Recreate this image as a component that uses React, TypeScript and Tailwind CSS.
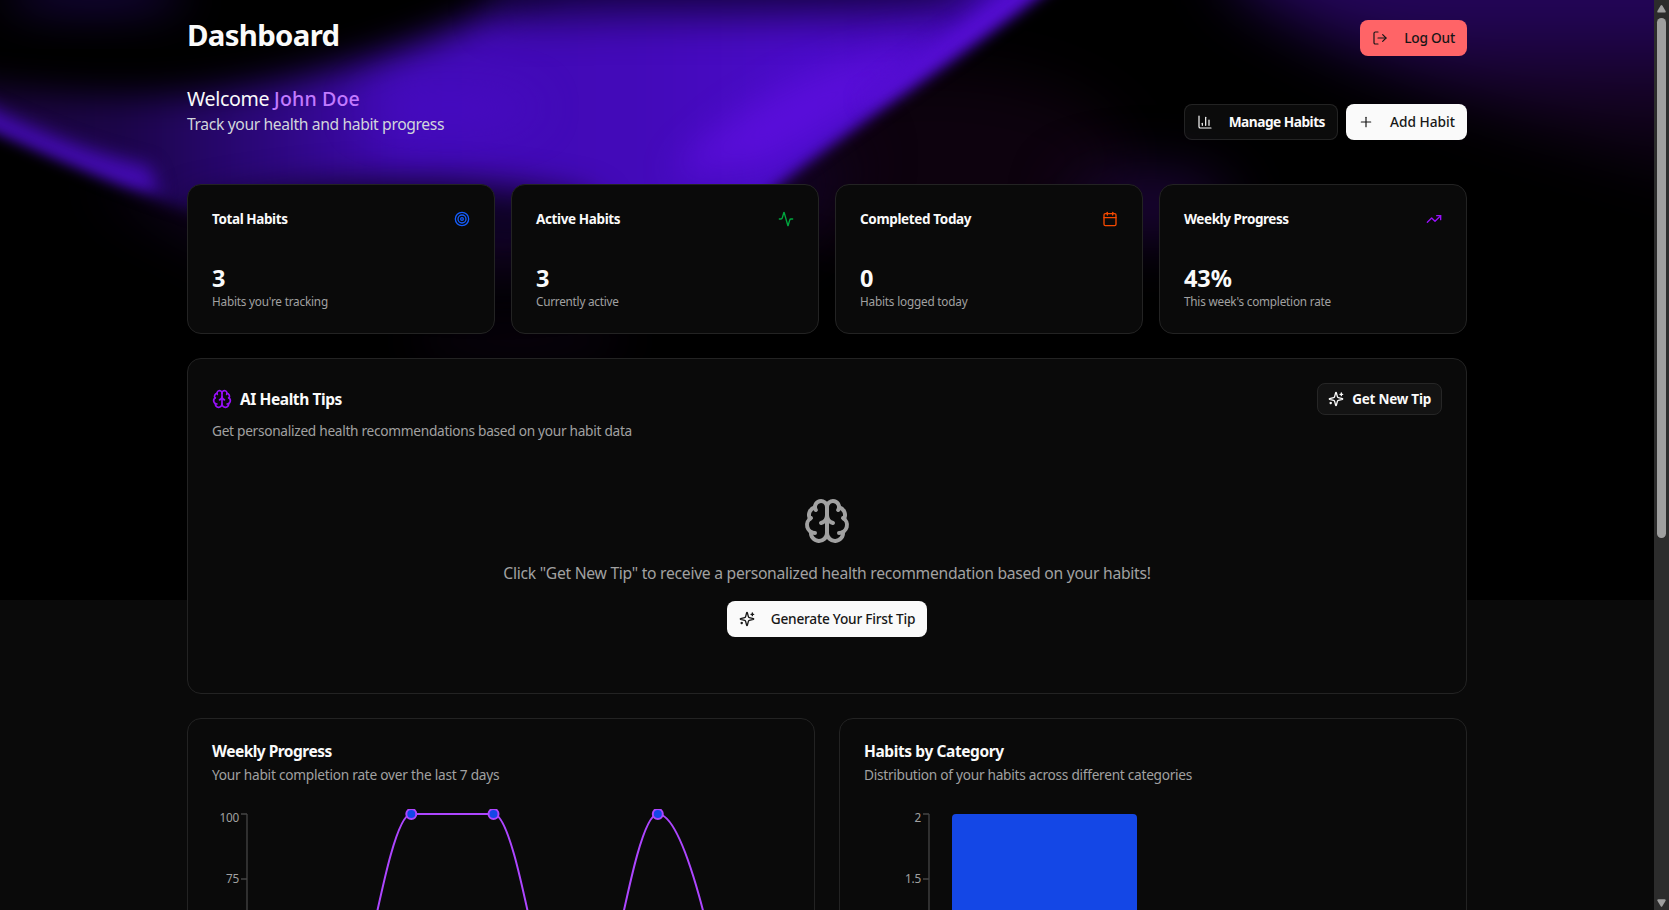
import type { ReactNode } from "react";
import {
  Activity,
  Brain,
  Calendar,
  ChartColumn,
  LogOut,
  Plus,
  Target,
  TrendingUp,
} from "lucide-react";

function Sparkles({ className }: { className: string }) {
  return (
    <svg
      viewBox="0 0 24 24"
      fill="none"
      stroke="currentColor"
      strokeWidth="2"
      strokeLinecap="round"
      strokeLinejoin="round"
      className={className}
    >
      <path d="M9.937 15.5A2 2 0 0 0 8.5 14.063l-6.135-1.582a.5.5 0 0 1 0-.962L8.5 9.936A2 2 0 0 0 9.937 8.5l1.582-6.135a.5.5 0 0 1 .963 0L14.063 8.5A2 2 0 0 0 15.5 9.937l6.135 1.581a.5.5 0 0 1 0 .964L15.5 14.063a2 2 0 0 0-1.437 1.437l-1.582 6.135a.5.5 0 0 1-.963 0z" />
      <path d="M20 3v4" />
      <path d="M22 5h-4" />
      <path d="M4 17v2" />
      <path d="M5 18H3" />
    </svg>
  );
}

/* Decorative aurora behind the header */
function Aurora() {
  return (
    <svg
      width="1654"
      height="600"
      viewBox="0 0 1654 600"
      className="absolute top-0 left-0"
      aria-hidden="true"
    >
      <defs>
        <filter id="b5" x="-20%" y="-20%" width="140%" height="140%" colorInterpolationFilters="sRGB"><feGaussianBlur stdDeviation="7" /></filter>
        <filter id="b9" x="-30%" y="-60%" width="160%" height="220%" colorInterpolationFilters="sRGB"><feGaussianBlur stdDeviation="9" /></filter>
        <filter id="b14" x="-40%" y="-60%" width="180%" height="220%" colorInterpolationFilters="sRGB"><feGaussianBlur stdDeviation="17" /></filter>
        <filter id="b20" x="-40%" y="-100%" width="180%" height="300%" colorInterpolationFilters="sRGB"><feGaussianBlur stdDeviation="22" /></filter>
        <filter id="b30" x="-60%" y="-120%" width="220%" height="340%" colorInterpolationFilters="sRGB"><feGaussianBlur stdDeviation="30" /></filter>
        <linearGradient id="body" gradientUnits="userSpaceOnUse" x1="0" y1="0" x2="1060" y2="0">
          <stop offset="0" stopColor="#1a053c" />
          <stop offset="0.12" stopColor="#1c054a" />
          <stop offset="0.25" stopColor="#2c077c" />
          <stop offset="0.38" stopColor="#410ab6" />
          <stop offset="0.6" stopColor="#430ab9" />
          <stop offset="0.76" stopColor="#4a0bc8" />
          <stop offset="1" stopColor="#4008b0" />
        </linearGradient>
        <linearGradient id="right" x1="0" y1="0" x2="0" y2="1">
          <stop offset="0" stopColor="#260660" />
          <stop offset="0.3" stopColor="#220556" />
          <stop offset="0.6" stopColor="#140320" />
          <stop offset="1" stopColor="#020003" />
        </linearGradient>
        <mask id="edge" maskUnits="userSpaceOnUse" x="0" y="0" width="1654" height="600">
          <path
            d="M-60 110 L-60 -60 L1112 -60 C1034 4 974 48 872 117 C834 144 800 168 770 192 C745 222 700 235 640 245 L300 240 C200 222 110 184 0 135 L-60 107 Z"
            fill="#fff"
            filter="url(#b5)"
          />
        </mask>
      </defs>
      <rect width="1654" height="600" fill="#000" />

      {/* faint violet haze */}
      <ellipse cx="930" cy="160" rx="200" ry="90" fill="#0d020e" filter="url(#b30)" />
      <ellipse cx="1150" cy="205" rx="80" ry="30" fill="#1f053e" filter="url(#b30)" />
      <ellipse cx="520" cy="340" rx="110" ry="14" fill="#0c0212" filter="url(#b20)" />
      <path d="M100 180 L860 150 L800 240 L500 270 L240 250 Z" fill="#130326" filter="url(#b30)" />
      <path d="M1230 -70 L1760 -70 L1760 210 C1600 140 1380 90 1230 -20 Z" fill="url(#right)" filter="url(#b30)" />

      <g mask="url(#edge)">
        <path
          d="M-60 82 C60 96 130 98 190 94 C320 80 440 48 570 -30 L1140 -60 L1060 260 L-60 260 Z"
          fill="url(#body)"
          filter="url(#b14)"
        />
        {/* top fade */}
        <path d="M500 -80 L1010 -80 L960 2 C880 14 760 14 640 12 L500 16 Z" fill="#12023a" filter="url(#b20)" />
        {/* lower fade */}
        <path d="M190 204 C330 174 470 172 590 200 L640 290 L160 290 Z" fill="#0e0224" filter="url(#b14)" />
        {/* bright core */}
        <path d="M670 175 C730 105 800 75 880 50 L950 40 L870 105 L765 165 Z" fill="#600fe2" opacity="0.72" filter="url(#b14)" />
        <ellipse cx="450" cy="108" rx="90" ry="20" fill="#4c0bcc" opacity="0.5" filter="url(#b20)" />
        {/* left streak */}
        <path d="M-30 98 C40 132 90 152 150 166 L160 194 L120 196 L-30 140 Z" fill="#420ab0" filter="url(#b9)" />
        {/* right streak */}
        <path d="M1074 -30 L1038 -30 L946 36 L860 100 L876 108 L975 45 Z" fill="#560dd4" filter="url(#b9)" />
      </g>
      <ellipse cx="95" cy="-5" rx="90" ry="18" fill="#160540" filter="url(#b20)" />
    </svg>
  );
}

function Card({ className, children }: { className: string; children: ReactNode }) {
  return (
    <section className={`rounded-[14px] border border-[#232323] bg-[#0a0a0a] p-6 ${className}`}>
      {children}
    </section>
  );
}

const stats = [
  { title: "Total Habits", value: "3", note: "Habits you're tracking", Icon: Target, color: "text-[#155dfc]", tt: "tracking-[-0.4px]", nt: "tracking-[-0.2px]" },
  { title: "Active Habits", value: "3", note: "Currently active", Icon: Activity, color: "text-[#00a63e]", tt: "tracking-[-0.38px]", nt: "tracking-[-0.24px]" },
  { title: "Completed Today", value: "0", note: "Habits logged today", Icon: Calendar, color: "text-[#f54900]", tt: "tracking-[-0.35px]", nt: "tracking-[-0.19px]" },
  { title: "Weekly Progress", value: "43%", note: "This week's completion rate", Icon: TrendingUp, color: "text-[#9810fa]", tt: "tracking-[-0.42px]", nt: "tracking-[-0.21px]" },
];

const axisText = "fill-[#a1a1a1] text-[11.75px] tracking-[-0.2px]";

function WeeklyChart() {
  return (
    <svg width="578" height="300" viewBox="0 0 578 300" className="mt-6 block">
      <g stroke="#454545" strokeWidth="1.3">
        <path d="M35 5V265" />
        <path d="M29 5H35M29 70H35M29 135H35M29 200H35M29 265H35" />
      </g>
      <text x="27" y="12.5" textAnchor="end" className={axisText}>100</text>
      <text x="27" y="74" textAnchor="end" className={axisText}>75</text>
      <path
        d="M35 265L117 265C144.5 265 172 5 199.3 5L281.5 5C309 5 336.5 265 363.7 265C391 265 418.5 5 445.8 5C473.2 5 500.6 135 528 265"
        fill="none"
        stroke="#ad46ff"
        strokeWidth="2"
      />
      <g fill="#1447e6" stroke="#ad46ff" strokeWidth="2">
        <circle cx="199.3" cy="5" r="5" />
        <circle cx="281.5" cy="5" r="5" />
        <circle cx="445.8" cy="5" r="5" />
      </g>
    </svg>
  );
}

function CategoryChart() {
  return (
    <svg width="578" height="300" viewBox="0 0 578 300" className="mt-6 block">
      <g stroke="#454545" strokeWidth="1.3">
        <path d="M65 5V265" />
        <path d="M59 5H65M59 70H65M59 135H65M59 200H65M59 265H65" />
      </g>
      <text x="57" y="12.5" textAnchor="end" className={axisText}>2</text>
      <text x="57" y="74" textAnchor="end" className={axisText}>1.5</text>
      <path d="M88 265V9a4 4 0 0 1 4-4H269a4 4 0 0 1 4 4V265Z" fill="#1447e6" />
    </svg>
  );
}

export default function App() {
  return (
    <div className="flex h-[910px] w-[1669px] overflow-hidden bg-[#0a0a0a] font-['Noto_Sans',sans-serif] text-[#fafafa]">
      <div className="relative h-full w-[1654px] overflow-hidden">
        <Aurora />
        <main className="relative mx-auto w-[1280px] pt-5">
          <header className="flex h-9 items-start justify-between">
            <h1 className="-mt-[3px] text-[29.4px] leading-9 font-bold tracking-[-0.7px]">Dashboard</h1>
            <button className="flex h-9 items-center gap-4 rounded-lg bg-[#ff6467] px-3 text-[13.7px] font-medium tracking-[-0.2px] text-[#171717]">
              <LogOut className="size-4" strokeWidth={1.8} />
              Log Out
            </button>
          </header>

          <div className="mt-7 flex h-14 items-end justify-between">
            <div className="pb-1">
              <h2 className="text-[19.6px] leading-[26px] tracking-[-0.32px]">
                Welcome <span className="font-medium tracking-[0.12px] text-[#c27aff]">John Doe</span>
              </h2>
              <p className="text-[15.7px] leading-6 tracking-[-0.375px] text-[#d1d5dc]">
                Track your health and habit progress
              </p>
            </div>
            <div className="flex gap-2">
              <button className="flex h-9 items-center gap-4 rounded-lg border border-white/10 bg-white/[0.045] px-3 text-[13.7px] font-bold tracking-[-0.5px]">
                <ChartColumn className="size-4" strokeWidth={1.8} />
                Manage Habits
              </button>
              <button className="flex h-9 items-center gap-4 rounded-lg bg-[#fafafa] px-3 text-[13.7px] font-medium text-[#171717]">
                <Plus className="size-4" strokeWidth={1.8} />
                Add Habit
              </button>
            </div>
          </div>

          <div className="mt-11 grid grid-cols-4 gap-4">
            {stats.map(({ title, value, note, Icon, color, tt, nt }) => (
              <Card key={title} className="h-[150px]">
                <div className="flex h-5 items-center justify-between">
                  <h3 className={`text-[13.5px] leading-5 font-bold ${tt}`}>{title}</h3>
                  <Icon className={`size-4 ${color}`} />
                </div>
                <div className="mt-[33px] text-[23.5px] leading-8 font-bold tracking-[-0.1px]">{value}</div>
                <p className={`-mt-px text-[11.75px] leading-4 text-[#a1a1a1] ${nt}`}>{note}</p>
              </Card>
            ))}
          </div>

          <Card className="mt-6 h-[336px]">
            <div className="flex h-8 items-center justify-between">
              <h3 className="flex items-center gap-2 text-[15.5px] font-bold tracking-[-0.42px]">
                <Brain className="size-5 text-[#9810fa]" />
                <span className="pt-0.5">AI Health Tips</span>
              </h3>
              <button className="flex h-8 items-center gap-2 rounded-lg border border-[#262626] bg-[#131313] px-2.5 text-[13.5px] font-bold tracking-[-0.23px]">
                <Sparkles className="size-4" />
                Get New Tip
              </button>
            </div>
            <p className="mt-1.5 text-[13.7px] leading-5 tracking-[-0.29px] text-[#a1a1a1]">
              Get personalized health recommendations based on your habit data
            </p>
            <div className="mt-6 flex flex-col items-center py-8">
              <Brain className="size-12 text-[#a1a1a1]" />
              <p className="mt-4 text-[15.7px] leading-6 tracking-[-0.28px] text-[#a1a1a1]">
                Click "Get New Tip" to receive a personalized health recommendation based on your habits!
              </p>
              <button className="mt-4 flex h-9 items-center gap-4 rounded-lg bg-[#fafafa] px-3 text-[13.7px] font-medium tracking-[-0.23px] text-[#171717]">
                <Sparkles className="size-4" />
                Generate Your First Tip
              </button>
            </div>
          </Card>

          <div className="mt-6 grid grid-cols-2 gap-6">
            <Card className="h-[406px]">
              <h3 className="text-[15.5px] leading-4 font-bold tracking-[-0.52px]">Weekly Progress</h3>
              <p className="mt-1.5 text-[13.7px] leading-5 tracking-[-0.245px] text-[#a1a1a1]">
                Your habit completion rate over the last 7 days
              </p>
              <WeeklyChart />
            </Card>
            <Card className="h-[406px]">
              <h3 className="text-[15.5px] leading-4 font-bold tracking-[-0.4px]">Habits by Category</h3>
              <p className="mt-1.5 text-[13.7px] leading-5 tracking-[-0.276px] text-[#a1a1a1]">
                Distribution of your habits across different categories
              </p>
              <CategoryChart />
            </Card>
          </div>
        </main>
      </div>

      <aside className="flex w-[15px] flex-col items-center bg-[#2c2c2c] pt-[5px] pb-[3px]">
        <svg width="9" height="8" viewBox="0 0 9 8" fill="#9f9f9f"><path d="M3.7 0.6Q4.5-0.4 5.3 0.6L8.6 6Q9 7.6 7.6 7.6H1.4Q0 7.6 0.4 6Z" /></svg>
        <div className="mt-[5px] h-[520px] w-[9px] rounded-full bg-[#9f9f9f]" />
        <svg width="9" height="8" viewBox="0 0 9 8" fill="#9f9f9f" className="mt-auto"><path d="M3.7 7.2Q4.5 8.2 5.3 7.2L8.6 1.8Q9 0.2 7.6 0.2H1.4Q0 0.2 0.4 1.8Z" /></svg>
      </aside>
    </div>
  );
}
